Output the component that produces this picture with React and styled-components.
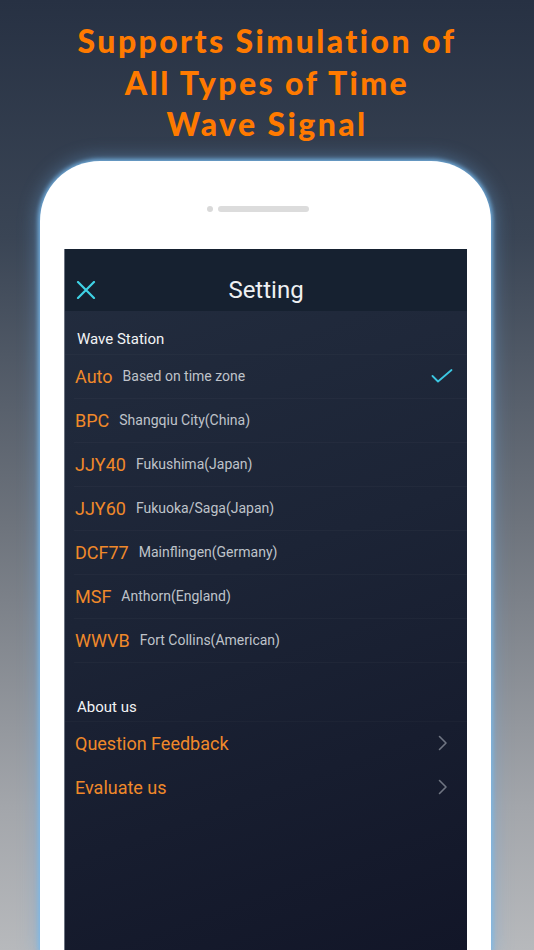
import styled, { createGlobalStyle } from 'styled-components'

const GlobalStyle = createGlobalStyle`
  html, body { margin: 0; padding: 0; }
  body {
    font-family: Roboto, "Noto Sans", Arial, sans-serif;
    background: #283244;
  }
`

// fond de la page : bleu nuit en haut, gris clair en bas
const Page = styled.div`
  width: 534px;
  height: 950px;
  overflow: hidden;
  background: linear-gradient(180deg, #273143 0%, #3a4555 25%, #6d737c 55%, #a3a6ab 85%, #b7b9bc 100%);
  display: flex;
  flex-direction: column;
  align-items: center;
`

const Headline = styled.h1`
  margin: 20px 0 0;
  font-family: Lato, "Open Sans", sans-serif;
  font-weight: 900;
  font-size: 32px;
  line-height: 41.5px;
  letter-spacing: 2.4px;
  color: #ff7a00;
  text-align: center;
`

const Phone = styled.div`
  margin-top: 16px;
  margin-right: 3px;
  width: 451px;
  flex: 1;
  background: #ffffff;
  border-radius: 60px 60px 0 0;
  box-shadow: 0 0 4px 2px rgba(120, 185, 235, 0.85), 0 0 18px 4px rgba(110, 170, 225, 0.4);
  padding: 0 24px;
  box-sizing: border-box;
  display: flex;
  flex-direction: column;
`

const SpeakerRow = styled.div`
  height: 88px;
  display: flex;
  align-items: center;
  justify-content: center;
  gap: 5px;
  padding-top: 8px;
  box-sizing: border-box;
  margin-left: -16px;
`

const Camera = styled.span`
  width: 6px;
  height: 6px;
  border-radius: 50%;
  background: #d9d9d9;
`

const Speaker = styled.span`
  width: 91px;
  height: 6px;
  border-radius: 3px;
  background: #dcdcdc;
`

const Screen = styled.div`
  flex: 1;
  background: linear-gradient(160deg, #232d3f 0%, #1c2436 45%, #121628 100%);
  border-left: 1px solid #6b7280;
  display: flex;
  flex-direction: column;
`

const NavBar = styled.div`
  height: 62px;
  background: #162130;
  display: flex;
  align-items: flex-end;
  justify-content: center;
  padding-bottom: 7px;
  box-sizing: border-box;
  position: relative;
`

const CloseButton = styled.button`
  position: absolute;
  left: 11px;
  top: 32px;
  background: none;
  border: 0;
  padding: 0;
  display: flex;
`

const NavTitle = styled.div`
  font-size: 24px;
  line-height: 28px;
  color: #eef0f2;
`

const SectionHeader = styled.div`
  height: ${({ $tall }) => ($tall ? '59px' : '44px')};
  display: flex;
  align-items: flex-end;
  padding: 0 0 ${({ $tall }) => ($tall ? '5px' : '6px')} 12px;
  box-sizing: border-box;
  font-size: 15px;
  color: #f2f3f5;
  border-bottom: 1px solid rgba(255, 255, 255, 0.025);
`

const Row = styled.div`
  height: 44px;
  margin-left: 9px;
  padding: 0 19px 0 1px;
  display: flex;
  align-items: center;
  box-sizing: border-box;
  border-bottom: 1px solid ${({ $plain }) => ($plain ? 'transparent' : 'rgba(255, 255, 255, 0.028)')};
`

const Code = styled.span`
  font-size: 18px;
  color: #f0892a;
`

const Place = styled.span`
  margin-left: 10px;
  font-size: 14px;
  color: #bfc3ca;
  flex: 1;
`

const LinkText = styled.span`
  font-size: 18px;
  color: #f0892a;
  flex: 1;
`

const stations = [
  { code: 'Auto', place: 'Based on time zone', selected: true },
  { code: 'BPC', place: 'Shangqiu City(China)' },
  { code: 'JJY40', place: 'Fukushima(Japan)' },
  { code: 'JJY60', place: 'Fukuoka/Saga(Japan)' },
  { code: 'DCF77', place: 'Mainflingen(Germany)' },
  { code: 'MSF', place: 'Anthorn(England)' },
  { code: 'WWVB', place: 'Fort Collins(American)' },
]

const links = ['Question Feedback', 'Evaluate us']

function CloseIcon() {
  return (
    <svg width="20" height="18" viewBox="0 0 20 18">
      <path d="M2 1 L18 17 M18 1 L2 17" stroke="#3fd3e6" strokeWidth="2.2" strokeLinecap="round" />
    </svg>
  )
}

function CheckIcon() {
  return (
    <svg width="22" height="14" viewBox="0 0 22 14" style={{ marginRight: -5 }}>
      <path d="M1.5 7 L7 12.5 L20.5 1" fill="none" stroke="#3cc7e2" strokeWidth="1.8" strokeLinecap="round" strokeLinejoin="round" />
    </svg>
  )
}

function Chevron() {
  return (
    <svg width="10" height="16" viewBox="0 0 10 16">
      <path d="M1.5 1.5 L8 8 L1.5 14.5" fill="none" stroke="#6f7582" strokeWidth="1.6" strokeLinecap="round" strokeLinejoin="round" />
    </svg>
  )
}

export default function App() {
  return (
    <Page>
      <GlobalStyle />
      <Headline>
        Supports Simulation of
        <br />
        All Types of Time
        <br />
        Wave Signal
      </Headline>
      <Phone>
        <SpeakerRow>
          <Camera />
          <Speaker />
        </SpeakerRow>
        <Screen>
          <NavBar>
            <CloseButton>
              <CloseIcon />
            </CloseButton>
            <NavTitle>Setting</NavTitle>
          </NavBar>
          <SectionHeader>Wave Station</SectionHeader>
          {stations.map((s) => (
            <Row key={s.code}>
              <Code>{s.code}</Code>
              <Place>{s.place}</Place>
              {s.selected && <CheckIcon />}
            </Row>
          ))}
          <SectionHeader $tall>About us</SectionHeader>
          {links.map((l) => (
            <Row key={l} $plain>
              <LinkText>{l}</LinkText>
              <Chevron />
            </Row>
          ))}
        </Screen>
      </Phone>
    </Page>
  )
}
